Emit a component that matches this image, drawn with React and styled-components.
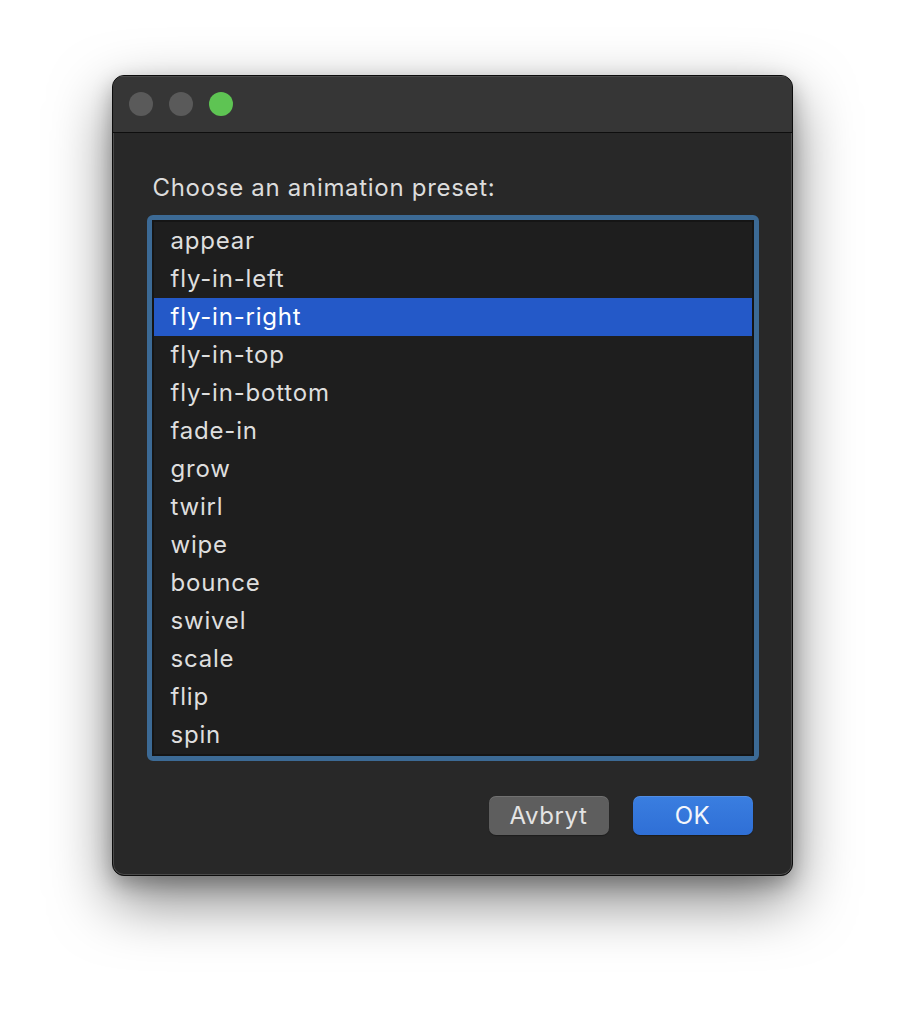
import React, { useState } from "react";
import styled, { createGlobalStyle } from "styled-components";

const GlobalStyle = createGlobalStyle`
  html, body {
    margin: 0;
    padding: 0;
    background: #ffffff;
  }
  body {
    font-family: Inter, "Noto Sans", "Liberation Sans", sans-serif;
  }
`;

const Stage = styled.div`
  width: 904px;
  height: 1024px;
  display: flex;
  justify-content: center;
  align-items: flex-start;
  padding-top: 75px;
  box-sizing: border-box;
  overflow: hidden;
`;

const Window = styled.div`
  width: 681px;
  height: 801px;
  box-sizing: border-box;
  display: flex;
  flex-direction: column;
  background: #282828;
  border-radius: 12px;
  border: 1px solid #0c0c0c;
  box-shadow: inset 0 0 0 1px #4a4a4a, 0 24px 60px rgba(0, 0, 0, 0.5),
    0 8px 20px rgba(0, 0, 0, 0.25);
  overflow: hidden;
`;

const TitleBar = styled.div`
  height: 56px;
  flex-shrink: 0;
  display: flex;
  align-items: center;
  gap: 16px;
  padding-left: 16px;
  background: #363636;
  border-bottom: 1px solid #0e0e0e;
  box-shadow: inset 0 1px 0 #4a4a4a;
`;

const Light = styled.span`
  width: 24px;
  height: 24px;
  border-radius: 50%;
  background: ${(p) => p.$color};
`;

const Content = styled.div`
  flex: 1;
  display: flex;
  flex-direction: column;
  padding: 41px 33px 40px 34px;
`;

const Label = styled.div`
  color: #dcdcdc;
  font-size: 24px;
  letter-spacing: 0.7px;
  line-height: 28px;
  margin-left: 6px;
  margin-bottom: 13px;
`;

const FocusRing = styled.div`
  border: 5px solid #3c6a95;
  border-radius: 6px;
`;

const List = styled.ul`
  list-style: none;
  margin: 0;
  padding: 0;
  background: #1e1e1e;
  border: 2px solid #151515;
`;

const Row = styled.li`
  height: 38px;
  display: flex;
  align-items: center;
  padding-left: 17px;
  padding-bottom: 1px;
  box-sizing: border-box;
  font-size: 24px;
  letter-spacing: 0.8px;
  color: ${(p) => (p.$selected ? "#ffffff" : "#dedede")};
  background: ${(p) => (p.$selected ? "#2459c8" : "transparent")};
  cursor: default;
`;

const Footer = styled.div`
  margin-top: auto;
  display: flex;
  justify-content: flex-end;
  gap: 24px;
  padding-right: 6px;
`;

const Button = styled.button`
  width: 120px;
  height: 39px;
  border: none;
  border-radius: 7px;
  font-family: inherit;
  font-size: 24px;
  letter-spacing: 0.6px;
  color: ${(p) => (p.$primary ? "#f4f6fb" : "#e4e4e4")};
  background: ${(p) =>
    p.$primary
      ? "linear-gradient(#3a7ee0, #2f6fd6)"
      : "#5e5e5e"};
  box-shadow: inset 0 1px 0 rgba(255, 255, 255, 0.12), 0 1px 1px rgba(0, 0, 0, 0.3);
  cursor: pointer;
`;

const presets = [
  "appear",
  "fly-in-left",
  "fly-in-right",
  "fly-in-top",
  "fly-in-bottom",
  "fade-in",
  "grow",
  "twirl",
  "wipe",
  "bounce",
  "swivel",
  "scale",
  "flip",
  "spin",
];

export default function App() {
  const [selected, setSelected] = useState("fly-in-right");
  return (
    <>
      <GlobalStyle />
      <Stage>
        <Window>
          <TitleBar>
            <Light $color="#5a5a5a" />
            <Light $color="#5a5a5a" />
            <Light $color="#5ec453" />
          </TitleBar>
          <Content>
            <Label>Choose an animation preset:</Label>
            <FocusRing>
              <List>
                {presets.map((name) => (
                  <Row
                    key={name}
                    $selected={name === selected}
                    onClick={() => setSelected(name)}
                  >
                    {name}
                  </Row>
                ))}
              </List>
            </FocusRing>
            <Footer>
              <Button>Avbryt</Button>
              <Button $primary>OK</Button>
            </Footer>
          </Content>
        </Window>
      </Stage>
    </>
  );
}
